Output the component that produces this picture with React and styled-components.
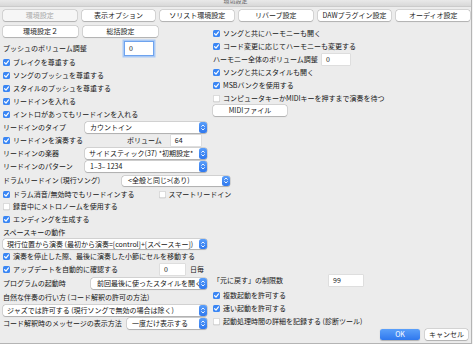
import React from "react";
import styled, { createGlobalStyle } from "styled-components";

const GlobalStyle = createGlobalStyle`
  html, body {
    margin: 0;
    padding: 0;
    background: #f2f2f2;
  }
  body {
    font-family: "Noto Sans CJK JP", "Liberation Sans", sans-serif;
    font-size: 7px;
    color: #151515;
  }
`;

const Window = styled.div`
  width: 471px;
  height: 343px;
  background: #ececec;
  border-right: 1px solid #b4b4b4;
  border-bottom: 1px solid #b4b4b4;
  display: flex;
  flex-direction: column;
  overflow: hidden;
`;

const TitleBar = styled.div`
  height: 6px;
  background: linear-gradient(#e9e9e9, #d8d8d8);
  border-bottom: 1px solid #cbcbcb;
  overflow: hidden;
  text-align: center;
`;

const Title = styled.span`
  display: block;
  margin-top: -3px;
  line-height: 8px;
  font-size: 6px;
  color: #6b6b6b;
`;

const TabGrid = styled.div`
  display: grid;
  grid-template-columns: repeat(${(p) => p.$cols}, ${(p) => p.$size || "1fr"});
  column-gap: 5px;
  margin-top: ${(p) => p.$top || 0}px;
  padding: 0 ${(p) => p.$right || 0}px 0 ${(p) => (p.$left === undefined ? 3 : p.$left)}px;
`;

const Button = styled.div`
  height: 11px;
  background: ${(p) => (p.$disabled ? "#f6f6f6" : "#ffffff")};
  color: ${(p) => (p.$disabled ? "#a9a9a9" : "#1a1a1a")};
  border-radius: 2.5px;
  box-shadow: 0 0 0 0.5px rgba(0, 0, 0, 0.18), 0 0.5px 1px rgba(0, 0, 0, 0.18);
  display: flex;
  align-items: center;
  justify-content: center;
  line-height: 1;
  white-space: nowrap;
`;

const PrimaryButton = styled(Button)`
  background: linear-gradient(#5ba0fa, #2f78ee);
  color: #fff;
  box-shadow: 0 0.5px 1px rgba(0, 0, 0, 0.25);
`;

const Body = styled.div`
  flex: 1;
  display: grid;
  grid-template-columns: 210px 1fr;
  margin-top: 5px;
  padding-left: 3px;
  min-height: 0;
`;

const LeftCol = styled.div`
  display: flex;
  flex-direction: column;
`;

const RightCol = styled.div`
  display: flex;
  flex-direction: column;
  padding: 1px 3px 3px 0;
`;

const Row = styled.div`
  display: flex;
  align-items: center;
  height: ${(p) => p.$h || 13}px;
  flex: none;
  white-space: nowrap;
  line-height: 1;
  margin-top: ${(p) => p.$mt || 0}px;
  margin-bottom: ${(p) => p.$mb || 0}px;
`;

const Label = styled.span`
  width: ${(p) => (p.$w ? `${p.$w}px` : "auto")};
  flex: none;
  margin-left: ${(p) => p.$ml || 0}px;
`;

const Box = styled.span`
  width: 7px;
  height: 7px;
  flex: none;
  border-radius: 1.5px;
  margin-right: 3px;
  margin-left: ${(p) => p.$ml || 0}px;
  background: ${(p) => (p.$on ? "#3a86f4" : "#ffffff")};
  box-shadow: ${(p) =>
    p.$on ? "none" : "inset 0 0 0 0.5px #b9b9b9, 0 0.5px 0.5px rgba(0,0,0,0.1)"};
  display: flex;
  align-items: center;
  justify-content: center;
`;

const Field = styled.div`
  width: ${(p) => p.$w}px;
  height: ${(p) => p.$h || 11}px;
  flex: none;
  margin-left: ${(p) => p.$ml || 0}px;
  background: #fff;
  box-shadow: ${(p) =>
    p.$focus
      ? "0 0 0 1px #6ea3ee, 0 0 0 2.5px #a9c9f5"
      : "0 0 0 0.5px rgba(0,0,0,0.12)"};
  display: flex;
  align-items: center;
  padding-left: 4px;
  box-sizing: border-box;
`;

const SelectBox = styled.div`
  width: ${(p) => p.$w}px;
  height: ${(p) => p.$h || 11}px;
  flex: none;
  margin-left: ${(p) => p.$ml || 0}px;
  background: #fff;
  border-radius: 2.5px;
  box-shadow: 0 0 0 0.5px rgba(0, 0, 0, 0.2), 0 0.5px 1px rgba(0, 0, 0, 0.18);
  display: flex;
  align-items: center;
  padding-left: ${(p) => p.$pl || 5}px;
  box-sizing: border-box;
`;

const SelectText = styled.span`
  flex: 1;
  min-width: 0;
  line-height: 11px;
  white-space: nowrap;
  overflow: ${(p) => (p.$clip ? "hidden" : "visible")};
`;

const Stepper = styled.span`
  width: 8px;
  height: 100%;
  flex: none;
  background: linear-gradient(#5a9ef9, #2f78ee);
  border-radius: 2.5px;
  display: flex;
  align-items: center;
  justify-content: center;
  position: relative;
`;

const Spacer = styled.div`
  margin-top: auto;
`;

const ButtonRow = styled.div`
  display: flex;
  justify-content: flex-end;
  gap: 5px;
  margin-top: 1px;
`;

const SizedButton = styled(Button)`
  width: ${(p) => p.$w}px;
`;

const SizedPrimary = styled(PrimaryButton)`
  width: ${(p) => p.$w}px;
`;

function Check({ on = true, children, ml }) {
  return (
    <>
      <Box $on={on} $ml={ml}>
        {on && (
          <svg width="7" height="7" viewBox="0 0 10 10">
            <path
              d="M2.3 5.3 L4.3 7.3 L7.9 2.7"
              fill="none"
              stroke="#fff"
              strokeWidth="1.7"
              strokeLinecap="round"
              strokeLinejoin="round"
            />
          </svg>
        )}
      </Box>
      <span>{children}</span>
    </>
  );
}

function Select({ w, ml, h, pl, clip, children }) {
  return (
    <SelectBox $w={w} $ml={ml} $h={h} $pl={pl}>
      <SelectText $clip={clip}>{children}</SelectText>
      <Stepper>
        <svg width="6" height="9" viewBox="0 0 6 9">
          <path
            d="M1.6 3.4 L3 2 L4.4 3.4 M1.6 5.6 L3 7 L4.4 5.6"
            fill="none"
            stroke="#fff"
            strokeWidth="0.9"
            strokeLinecap="round"
            strokeLinejoin="round"
          />
        </svg>
      </Stepper>
    </SelectBox>
  );
}

const topTabs = [
  "環境設定",
  "表示オプション",
  "ソリスト環境設定",
  "リバーブ設定",
  "DAWプラグイン設定",
  "オーディオ設定",
];

export default function App() {
  return (
    <>
      <GlobalStyle />
      <Window>
        <TitleBar>
          <Title>環境設定</Title>
        </TitleBar>
        <TabGrid $cols={6} $top={3} $right={1}>
          {topTabs.map((t, i) => (
            <Button key={t} $disabled={i === 0}>
              {t}
            </Button>
          ))}
        </TabGrid>
        <Body>
          <LeftCol>
            <TabGrid $cols={2} $size="75px" $left={0}>
              <Button>環境設定２</Button>
              <Button>総括設定</Button>
            </TabGrid>
            <Row $h={16} $mt={3}>
              <Label $w={122}>プッシュのボリューム調整</Label>
              <Field $w={28} $h={13} $focus>
                0
              </Field>
            </Row>
            <Row>
              <Check>ブレイクを尊重する</Check>
            </Row>
            <Row>
              <Check>ソングのプッシュを尊重する</Check>
            </Row>
            <Row>
              <Check>スタイルのプッシュを尊重する</Check>
            </Row>
            <Row>
              <Check>リードインを入れる</Check>
            </Row>
            <Row>
              <Check>イントロがあってもリードインを入れる</Check>
            </Row>
            <Row>
              <Label $w={82}>リードインのタイプ</Label>
              <Select w={122}>カウントイン</Select>
            </Row>
            <Row>
              <Check>リードインを演奏する</Check>
              <Label $ml={44}>ボリューム</Label>
              <Field $w={30} $ml={9}>
                64
              </Field>
            </Row>
            <Row>
              <Label $w={82}>リードインの楽器</Label>
              <Select w={122} pl={4}>
                サイドスティック(37) *初期設定*
              </Select>
            </Row>
            <Row>
              <Label $w={82}>リードインのパターン</Label>
              <Select w={122}>1–3– 1234</Select>
            </Row>
            <Row $h={15}>
              <Label $w={119}>ドラムリードイン (現行ソング)</Label>
              <Select w={108} h={10} pl={6}>
                {"<全般と同じ>(あり)"}
              </Select>
            </Row>
            <Row $h={12}>
              <Check>ドラム消音/無効時でもリードインする</Check>
              <Check on={false} ml={24}>
                スマートリードイン
              </Check>
            </Row>
            <Row>
              <Check on={false}>録音中にメトロノームを使用する</Check>
            </Row>
            <Row>
              <Check>エンディングを生成する</Check>
            </Row>
            <Row $h={12}>
              <Label>スペースキーの動作</Label>
            </Row>
            <Row $h={12}>
              <Select w={204} h={10} pl={4}>
                現行位置から演奏 (最初から演奏=[control]+[スペースキー])
              </Select>
            </Row>
            <Row>
              <Check>演奏を停止した際、最後に演奏した小節にセルを移動する</Check>
            </Row>
            <Row>
              <Check>アップデートを自動的に確認する</Check>
              <Field $w={25} $ml={42}>
                0
              </Field>
              <Label $ml={5}>日毎</Label>
            </Row>
            <Row $h={15}>
              <Label $w={88}>プログラムの起動時</Label>
              <Select w={116} pl={6}>
                前回最後に使ったスタイルを開く
              </Select>
            </Row>
            <Row>
              <Label>自然な伴奏の行い方 (コード解釈の許可の方法)</Label>
            </Row>
            <Row>
              <Select w={204} pl={4}>
                ジャズでは許可する (現行ソングで無効の場合は除く)
              </Select>
            </Row>
            <Row>
              <Label $w={124}>コード解釈時のメッセージの表示方法</Label>
              <Select w={80} pl={5}>
                一度だけ表示する
              </Select>
            </Row>
          </LeftCol>

          <RightCol>
            <Row>
              <Check>ソングと共にハーモニーも開く</Check>
            </Row>
            <Row>
              <Check>コード変更に応じてハーモニーも変更する</Check>
            </Row>
            <Row>
              <Label $w={109}>ハーモニー全体のボリューム調整</Label>
              <Field $w={28}>0</Field>
            </Row>
            <Row>
              <Check>ソングと共にスタイルも開く</Check>
            </Row>
            <Row>
              <Check>MSBバンクを使用する</Check>
            </Row>
            <Row>
              <Check on={false}>コンピュータキーかMIDIキーを押すまで演奏を待つ</Check>
            </Row>
            <SizedButton $w={74}>MIDIファイル</SizedButton>

            <Spacer />
            <Row $h={14} $mb={2}>
              <Label $w={116}>「元に戻す」の制限数</Label>
              <Field $w={34}>99</Field>
            </Row>
            <Row>
              <Check>複数起動を許可する</Check>
            </Row>
            <Row>
              <Check>速い起動を許可する</Check>
            </Row>
            <Row>
              <Check on={false}>起動処理時間の詳細を記録する (診断ツール)</Check>
            </Row>
            <ButtonRow>
              <SizedPrimary $w={40}>OK</SizedPrimary>
              <SizedButton $w={43}>キャンセル</SizedButton>
            </ButtonRow>
          </RightCol>
        </Body>
      </Window>
    </>
  );
}
